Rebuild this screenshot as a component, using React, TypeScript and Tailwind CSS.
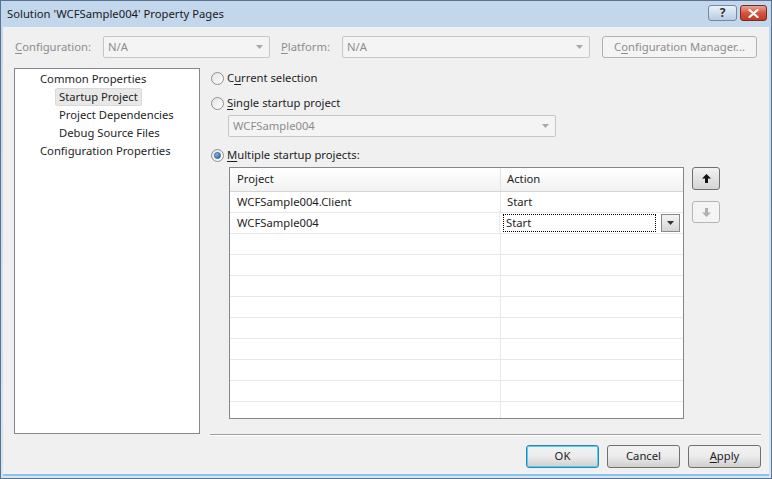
import React from 'react';

const font = { fontFamily: '"Noto Sans", "Open Sans", sans-serif' };

function U({ children }: { children: React.ReactNode }) {
  return <span className="underline underline-offset-2">{children}</span>;
}

function Radio({ checked }: { checked?: boolean }) {
  return (
    <span className="w-[13px] h-[13px] rounded-full border border-[#8e8f8f] bg-gradient-to-br from-[#e2e2e2] to-[#ffffff] flex items-center justify-center shrink-0">
      {checked && <span className="w-[7px] h-[7px] rounded-full bg-gradient-to-br from-[#9fd0f2] to-[#1c5fa8] border border-[#2a5d96]" />}
    </span>
  );
}

function ComboArrow({ light }: { light?: boolean }) {
  return (
    <svg width="7" height="4" viewBox="0 0 7 4">
      <path d="M0 0h7L3.5 4z" fill={light ? '#a8a8a8' : '#333'} />
    </svg>
  );
}

function DisabledCombo({ text, className }: { text: string; className: string }) {
  return (
    <div className={`h-[22px] border border-[#c6c6c6] rounded-[2px] bg-[#f4f4f4] flex items-center pl-[4px] pr-[6px] text-[#8d8d8d] ${className}`}>
      <span className="flex-1">{text}</span>
      <ComboArrow light />
    </div>
  );
}

function Button({ children, className = '', def }: { children: React.ReactNode; className?: string; def?: boolean }) {
  return (
    <div
      className={`h-[23px] rounded-[3px] border ${def ? 'border-[#3c7fb1] shadow-[inset_0_0_0_1px_#48d2fb]' : 'border-[#707070]'} bg-gradient-to-b from-[#f2f2f2] via-[#ebebeb] to-[#cfcfcf] flex items-center justify-center text-[#1e1e1e] ${className}`}
    >
      {children}
    </div>
  );
}

const rows = [
  { project: 'WCFSample004.Client', action: 'Start' },
  { project: 'WCFSample004', action: 'Start', focus: true },
];

export default function App() {
  const empty = Array.from({ length: 10 });
  return (
    <div style={font} className="w-[772px] h-[479px] flex flex-col bg-gradient-to-b from-[#c2d6ec] to-[#d6e4f3] border border-[#5a7390] text-[11.25px] text-[#1e1e1e] overflow-hidden">
      {/* title bar */}
      <div className="h-[26px] flex items-center pl-[6px] pr-[4px] shrink-0">
        <span className="flex-1 text-[#1a1a1a]">Solution 'WCFSample004' Property Pages</span>
        <div className="flex gap-[3px] -mt-[2px]">
          <div className="w-[29px] h-[16px] rounded-[3px] border border-[#6f8aa8] bg-gradient-to-b from-[#e9f0f8] to-[#b9cce2] flex items-center justify-center text-[#333] text-[12px] font-bold leading-none">?</div>
          <div className="w-[27px] h-[16px] rounded-[3px] border border-[#7a2a22] bg-gradient-to-b from-[#e8a394] via-[#d4533d] to-[#c23a24] flex items-center justify-center">
            <svg width="11" height="9" viewBox="0 0 11 9">
              <path d="M1.5 1l8 7M9.5 1l-8 7" stroke="#fff" strokeWidth="2.2" strokeLinecap="round" />
            </svg>
          </div>
        </div>
      </div>

      {/* client */}
      <div className="flex-1 mx-[2px] mb-[2px] bg-[#f0f0f0] border-b-[2px] border-[#8ac6ea] flex flex-col pl-[11px] pr-[8px]">
        {/* configuration row */}
        <div className="flex items-center mt-[9px] h-[22px]">
          <span className="w-[89px] pl-[1px] text-[#8d8d8d]"><U>C</U>onfiguration:</span>
          <DisabledCombo text="N/A" className="w-[167px]" />
          <span className="w-[61px] ml-[11px] text-[#8d8d8d]"><U>P</U>latform:</span>
          <DisabledCombo text="N/A" className="w-[248px]" />
          <div className="ml-[12px] w-[155px] h-[22px] rounded-[3px] border border-[#adb2b5] bg-[#f4f4f4] flex items-center justify-center text-[#8d8d8d]">
            C<U>o</U>nfiguration Manager...
          </div>
        </div>

        {/* main */}
        <div className="flex mt-[10px] h-[366px]">
          <div className="w-[186px] h-[366px] border border-[#828790] bg-white pt-[1px] leading-[18px] shrink-0">
            <div className="pl-[25px]">Common Properties</div>
            <div className="pl-[40px]">
              <span className="inline-block bg-[#e8e8e8] border border-[#dadada] rounded-[2px] px-[3px] leading-[16px]">Startup Project</span>
            </div>
            <div className="pl-[44px]">Project Dependencies</div>
            <div className="pl-[44px]">Debug Source Files</div>
            <div className="pl-[25px]">Configuration Properties</div>
          </div>

          <div className="ml-[11px] flex-1 flex flex-col">
            <div className="flex items-center gap-[3px] h-[18px] mt-[1px]">
              <Radio />
              <span>C<U>u</U>rrent selection</span>
            </div>
            <div className="flex items-center gap-[3px] h-[18px] mt-[7px]">
              <Radio />
              <span><U>S</U>ingle startup project</span>
            </div>
            <DisabledCombo text="WCFSample004" className="w-[328px] ml-[17px] mt-[3px]" />
            <div className="flex items-center gap-[3px] h-[18px] mt-[9px]">
              <Radio checked />
              <span><U>M</U>ultiple startup projects:</span>
            </div>

            <div className="flex ml-[18px] mt-[3px]">
              <div className="w-[455px] h-[252px] border border-[#828790] bg-white overflow-hidden shrink-0">
                <div className="flex h-[24px] border-b border-[#d5d5d5] bg-gradient-to-b from-[#ffffff] to-[#f2f2f2]">
                  <div className="w-[271px] border-r border-[#e2e2e2] pl-[7px] flex items-center">Project</div>
                  <div className="flex-1 pl-[6px] flex items-center">Action</div>
                </div>
                {rows.map((r) => (
                  <div key={r.project} className="flex h-[21px] border-b border-[#e8e8e8]">
                    <div className="w-[271px] border-r border-[#e8e8e8] pl-[7px] flex items-center">{r.project}</div>
                    {r.focus ? (
                      <div className="flex-1 flex items-center pl-[3px] pr-[3px] gap-[5px]">
                        <div className="w-[153px] h-[18px] border border-dotted border-black pl-[2px] flex items-center">{r.action}</div>
                        <div className="w-[19px] h-[18px] border border-[#8a8a8a] bg-gradient-to-b from-[#f4f4f4] to-[#d6d6d6] flex items-center justify-center">
                          <ComboArrow />
                        </div>
                      </div>
                    ) : (
                      <div className="flex-1 pl-[6px] flex items-center">{r.action}</div>
                    )}
                  </div>
                ))}
                {empty.map((_, i) => (
                  <div key={i} className="flex h-[21px] border-b border-[#e8e8e8]">
                    <div className="w-[271px] border-r border-[#e8e8e8]" />
                    <div className="flex-1" />
                  </div>
                ))}
              </div>
              <div className="ml-[8px] flex flex-col">
                <div className="w-[28px] h-[23px] rounded-[3px] border border-[#707070] bg-gradient-to-b from-[#f2f2f2] to-[#d4d4d4] flex items-center justify-center">
                  <svg width="9" height="9" viewBox="0 0 9 9">
                    <path d="M4.5 0L9 4.5H6V9H3V4.5H0z" fill="#111" />
                  </svg>
                </div>
                <div className="mt-[11px] w-[28px] h-[22px] rounded-[3px] border border-[#b5b5b5] bg-[#f4f4f4] flex items-center justify-center">
                  <svg width="9" height="9" viewBox="0 0 9 9">
                    <path d="M3 0H6V4.5H9L4.5 9L0 4.5H3z" fill="#b0b0b0" />
                  </svg>
                </div>
              </div>
            </div>
          </div>
        </div>

        {/* separator */}
        <div className="ml-[196px] border-t border-[#a0a0a0] border-b border-b-white" />

        {/* buttons */}
        <div className="flex justify-end gap-[8px] mt-[9px]">
          <Button def className="w-[73px]">OK</Button>
          <Button className="w-[73px]">Cancel</Button>
          <Button className="w-[73px]"><U>A</U>pply</Button>
        </div>
      </div>
    </div>
  );
}
